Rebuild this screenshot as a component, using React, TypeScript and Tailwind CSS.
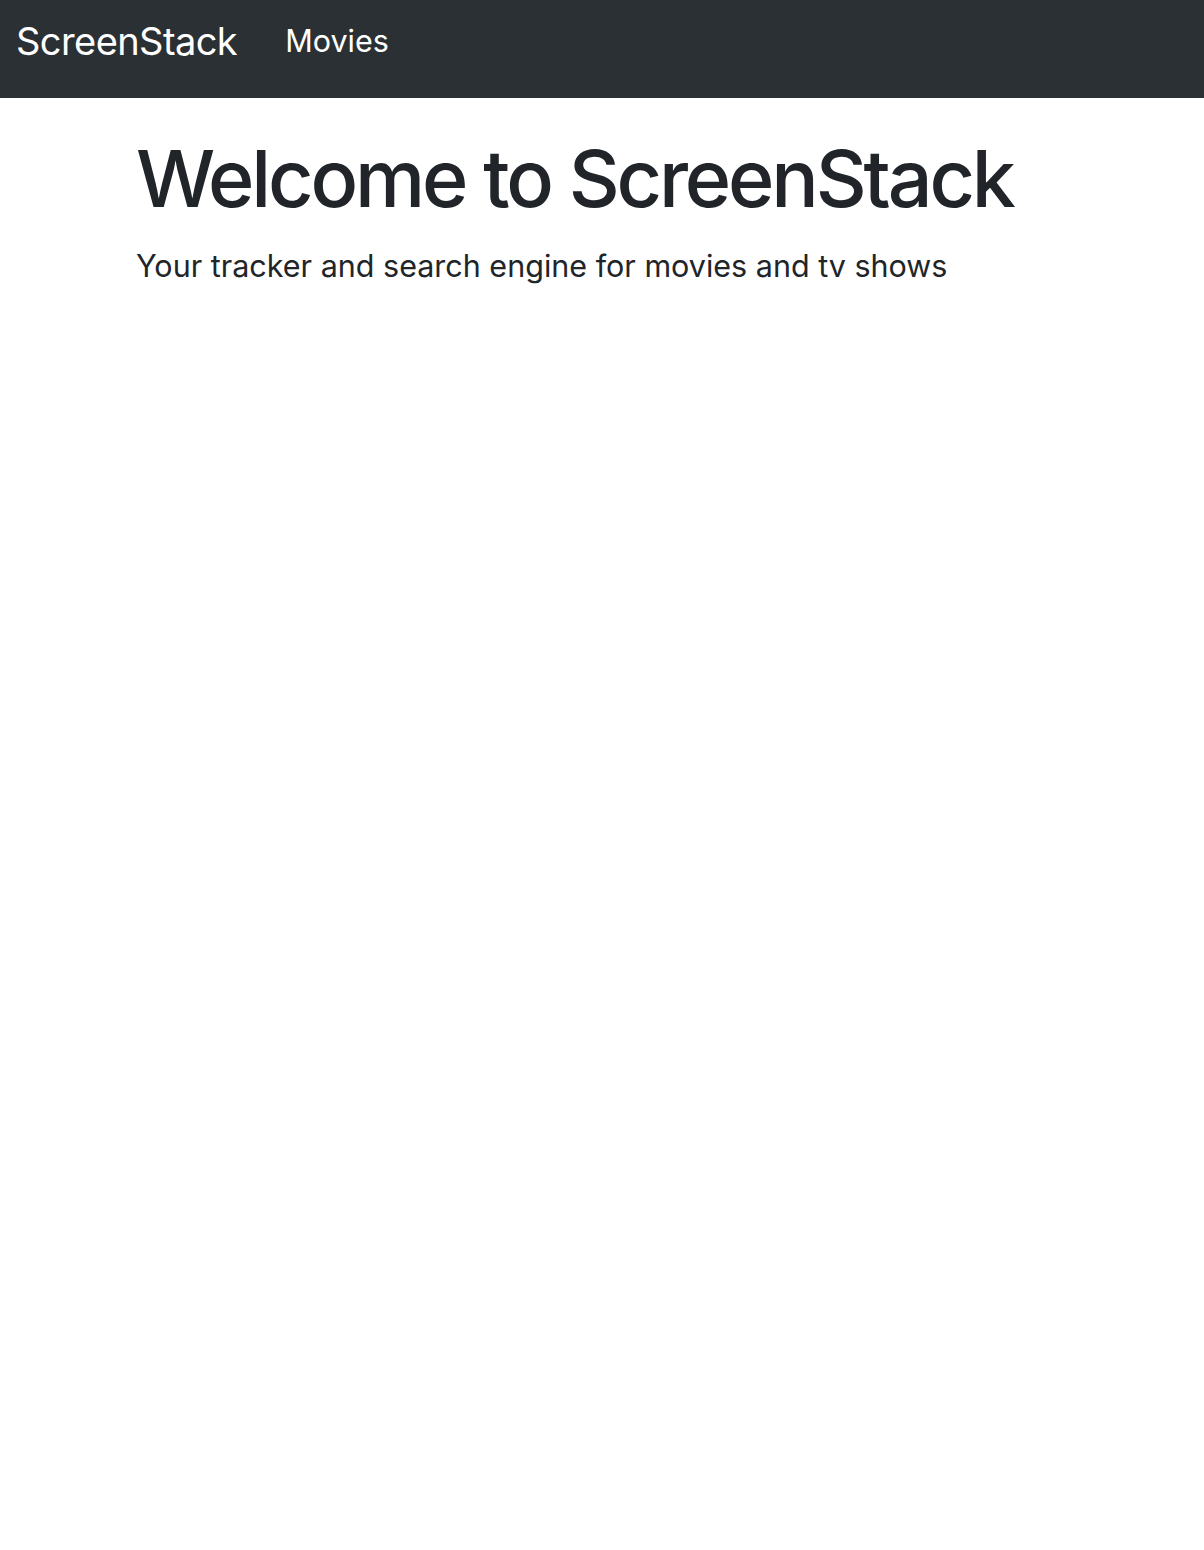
const App = () => {
  return (
    <div className="min-h-[1550px] bg-white font-['Inter',_'Liberation_Sans',_sans-serif] text-[#212529]">
      <nav className="h-[98px] bg-[#2b3035] flex items-center px-4">
        <a className="text-[38px] text-white tracking-[-0.015em] leading-none pb-4">ScreenStack</a>
        <a className="ml-[48px] text-[30.5px] text-white leading-none pb-4">Movies</a>
      </nav>
      <main className="px-[136px] pt-[33px]">
        <h1 className="whitespace-nowrap text-[79px] font-medium leading-[1.2] tracking-[-0.04em]">Welcome to ScreenStack</h1>
        <p className="mt-[17px] text-[30.5px] leading-[1.5]">Your tracker and search engine for movies and tv shows</p>
      </main>
    </div>
  );
};

export default App;
